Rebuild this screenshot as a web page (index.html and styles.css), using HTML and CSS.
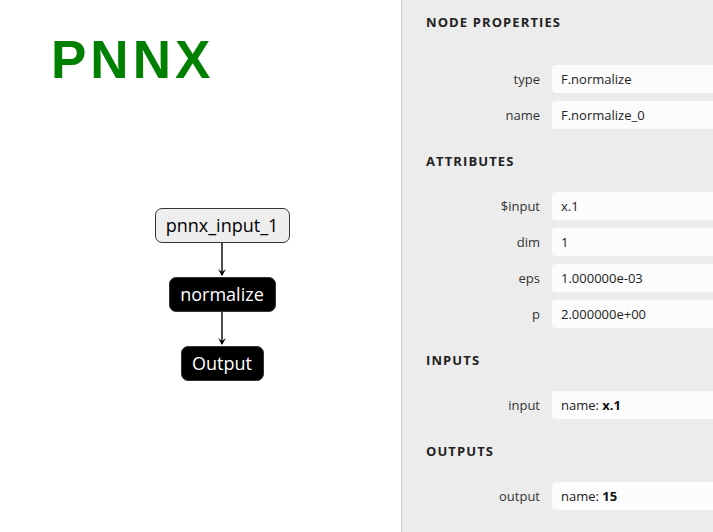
FILE: index.html
```html
<!DOCTYPE html>
<html>
<head>
<meta charset="utf-8">
<link rel="stylesheet" href="styles.css">
</head>
<body>
<div class="app">
  <div class="canvas">
    <div class="logo">PNNX</div>
    <div class="graph">
      <div class="node node-input">pnnx_input_1</div>
      <svg class="edge" width="12" height="34" viewBox="0 0 12 34"><line x1="6" y1="0" x2="6" y2="32" stroke="#000" stroke-width="1.4"/><path d="M2 26 L6 33 L10 26 L6 29 Z" fill="#000"/></svg>
      <div class="node node-op op-normalize">normalize</div>
      <svg class="edge" width="12" height="34" viewBox="0 0 12 34"><line x1="6" y1="0" x2="6" y2="32" stroke="#000" stroke-width="1.4"/><path d="M2 26 L6 33 L10 26 L6 29 Z" fill="#000"/></svg>
      <div class="node node-op op-output">Output</div>
    </div>
  </div>
  <div class="sidebar">
    <div class="section-title first">NODE PROPERTIES</div>
    <div class="rows">
      <div class="row"><div class="label">type</div><div class="value">F.normalize</div></div>
      <div class="row"><div class="label">name</div><div class="value">F.normalize_0</div></div>
    </div>
    <div class="section-title">ATTRIBUTES</div>
    <div class="rows">
      <div class="row"><div class="label">$input</div><div class="value">x.1</div></div>
      <div class="row"><div class="label">dim</div><div class="value">1</div></div>
      <div class="row"><div class="label">eps</div><div class="value">1.000000e-03</div></div>
      <div class="row"><div class="label">p</div><div class="value">2.000000e+00</div></div>
    </div>
    <div class="section-title">INPUTS</div>
    <div class="rows">
      <div class="row"><div class="label">input</div><div class="value">name: <b>x.1</b></div></div>
    </div>
    <div class="section-title">OUTPUTS</div>
    <div class="rows">
      <div class="row"><div class="label">output</div><div class="value">name: <b>15</b></div></div>
    </div>
  </div>
</div>
</body>
</html>
```

FILE: styles.css
```css
html, body {
  margin: 0;
  padding: 0;
  width: 713px;
  height: 532px;
  overflow: hidden;
  background: #fff;
}
.app {
  display: flex;
  height: 532px;
  font-family: "Open Sans", "Noto Sans", sans-serif;
}
.canvas {
  width: 401px;
  flex: none;
  border-right: 1px solid #cfcfcf;
  background: #fff;
}
.logo {
  font-family: "Liberation Sans", Arial, sans-serif;
  font-weight: bold;
  font-size: 53px;
  letter-spacing: 4px;
  color: #008000;
  line-height: 1;
  padding: 33px 0 0 51px;
}
.graph {
  display: flex;
  flex-direction: column;
  align-items: center;
  width: 444px;
  padding-top: 122px;
}
.node {
  box-sizing: border-box;
  height: 35px;
  border-radius: 7px;
  font-size: 18px;
  line-height: 33px;
  text-align: center;
  border: 1px solid #333;
}
.node-input {
  width: 135px;
  background: #eeeeee;
  color: #000;
  border: 1.5px solid #333;
}
.node-op {
  background: #000;
  color: #fff;
}
.op-normalize { width: 107px; }
.op-output { width: 83px; }
.edge {
  display: block;
}
.sidebar {
  flex: none;
  width: 520px;
  background: #ececec;
  padding: 12px 0 0 24px;
  box-sizing: border-box;
}
.section-title {
  font-weight: bold;
  font-size: 13px;
  letter-spacing: 1.1px;
  color: #222;
  height: 20px;
  line-height: 20px;
  margin-top: 22px;
  margin-bottom: 21px;
}
.section-title.first {
  margin-top: 0;
  margin-bottom: 33px;
}
.rows {
  display: flex;
  flex-direction: column;
  gap: 8px;
}
.row {
  display: flex;
  align-items: center;
  gap: 12px;
  height: 28px;
}
.label {
  width: 114px;
  text-align: right;
  font-size: 13px;
  color: #333;
}
.value {
  flex: 1;
  height: 28px;
  line-height: 28px;
  background: #fcfcfc;
  border-radius: 4px;
  padding-left: 9px;
  font-size: 13px;
  color: #222;
}
.value b {
  font-weight: bold;
  color: #111;
}
```
